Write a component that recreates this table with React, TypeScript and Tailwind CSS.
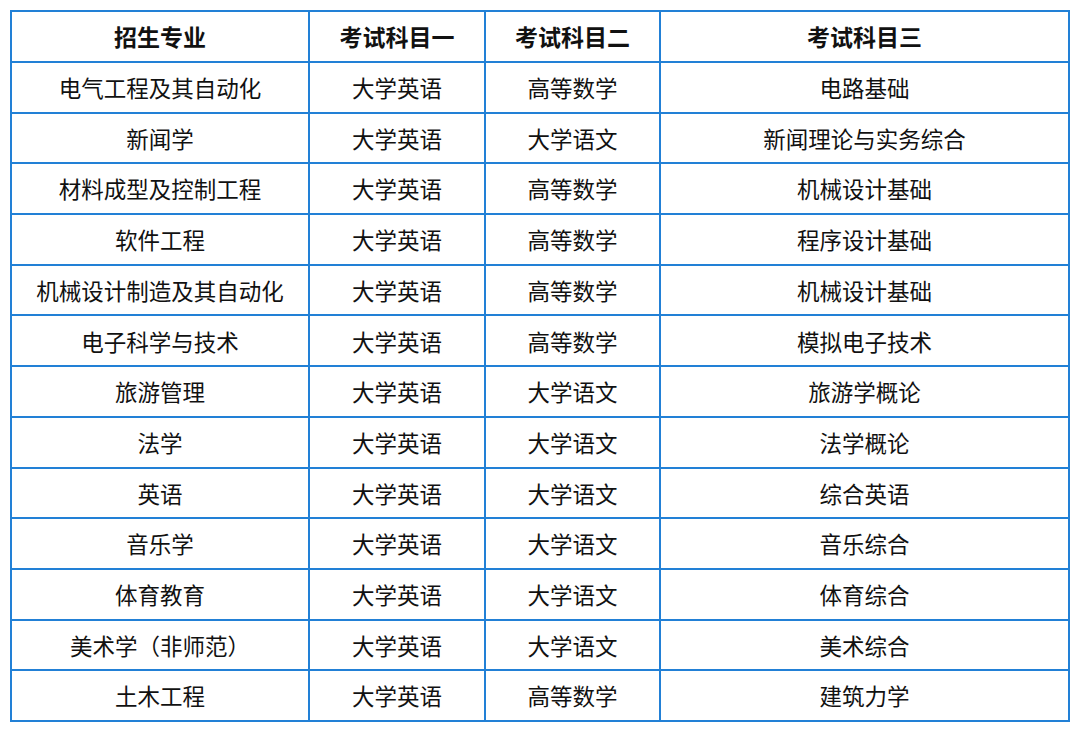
import React from 'react';

const head = ['招生专业', '考试科目一', '考试科目二', '考试科目三'];

const rows: string[][] = [
  ['电气工程及其自动化', '大学英语', '高等数学', '电路基础'],
  ['新闻学', '大学英语', '大学语文', '新闻理论与实务综合'],
  ['材料成型及控制工程', '大学英语', '高等数学', '机械设计基础'],
  ['软件工程', '大学英语', '高等数学', '程序设计基础'],
  ['机械设计制造及其自动化', '大学英语', '高等数学', '机械设计基础'],
  ['电子科学与技术', '大学英语', '高等数学', '模拟电子技术'],
  ['旅游管理', '大学英语', '大学语文', '旅游学概论'],
  ['法学', '大学英语', '大学语文', '法学概论'],
  ['英语', '大学英语', '大学语文', '综合英语'],
  ['音乐学', '大学英语', '大学语文', '音乐综合'],
  ['体育教育', '大学英语', '大学语文', '体育综合'],
  ['美术学（非师范）', '大学英语', '大学语文', '美术综合'],
  ['土木工程', '大学英语', '高等数学', '建筑力学'],
];

const widths = ['w-[298px]', 'w-[176px]', 'w-[175px]', 'w-[409px]'];

export default function App() {
  return (
    <div className="w-[1080px] h-[732px] bg-white pt-[10px] pl-[10px] font-['Noto_Sans_CJK_SC',sans-serif] text-[#111]">
      <table className="border-collapse table-fixed w-[1058px]">
        <colgroup>
          {widths.map((w, i) => (
            <col key={i} className={w} />
          ))}
        </colgroup>
        <thead>
          <tr className="h-[51px]">
            {head.map((h) => (
              <th key={h} className="border-2 border-[#2280d6] text-[23px] font-bold text-center p-0 leading-none">
                {h}
              </th>
            ))}
          </tr>
        </thead>
        <tbody>
          {rows.map((r, i) => (
            <tr key={i} className="h-[50.7px]">
              {r.map((c, j) => (
                <td key={j} className="border-2 border-[#2280d6] text-[22.5px] text-center p-0 leading-none">
                  {c}
                </td>
              ))}
            </tr>
          ))}
        </tbody>
      </table>
    </div>
  );
}
